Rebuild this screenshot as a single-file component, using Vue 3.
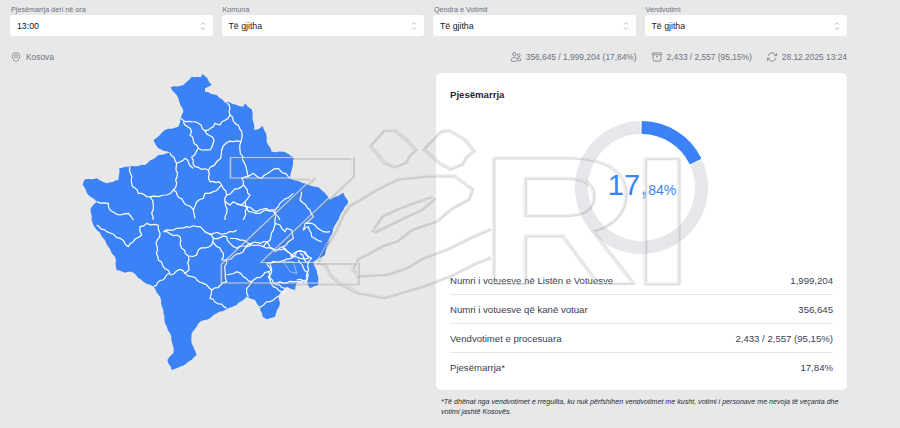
<template>
  <div class="page">
    <div class="filters">
      <div v-for="f in filters" :key="f.label" class="filter">
        <label class="filter-label">{{ f.label }}</label>
        <div class="filter-box">
          <span>{{ f.value }}</span>
          <svg viewBox="0 0 24 24" fill="none" stroke="currentColor" stroke-width="1.5">
            <path d="M8.25 15 12 18.75 15.75 15m-7.5-6L12 5.25 15.75 9" />
          </svg>
        </div>
      </div>
    </div>

    <div class="stats-row">
      <div class="stat">
        <svg viewBox="0 0 24 24" fill="none" stroke="currentColor" stroke-width="1.5">
          <path d="M15 10.5a3 3 0 1 1-6 0 3 3 0 0 1 6 0Z" />
          <path d="M19.5 10.5c0 7.142-7.5 11.25-7.5 11.25S4.5 17.642 4.5 10.5a7.5 7.5 0 1 1 15 0Z" />
        </svg>
        <span>Kosova</span>
      </div>
      <div class="stats-right">
        <div class="stat">
          <svg viewBox="0 0 24 24" fill="none" stroke="currentColor" stroke-width="1.5">
            <path d="M15 19.128a9.38 9.38 0 0 0 2.625.372 9.337 9.337 0 0 0 4.121-.952 4.125 4.125 0 0 0-7.533-2.493M15 19.128v-.003c0-1.113-.285-2.16-.786-3.07M15 19.128v.106A12.318 12.318 0 0 1 8.624 21c-2.331 0-4.512-.645-6.374-1.766l-.001-.109a6.375 6.375 0 0 1 11.964-3.07M12 6.375a3.375 3.375 0 1 1-6.75 0 3.375 3.375 0 0 1 6.75 0Zm8.25 2.25a2.625 2.625 0 1 1-5.25 0 2.625 2.625 0 0 1 5.25 0Z" />
          </svg>
          <span>356,645 / 1,999,204 (17,84%)</span>
        </div>
        <div class="stat">
          <svg viewBox="0 0 24 24" fill="none" stroke="currentColor" stroke-width="1.5">
            <path d="m20.25 7.5-.625 10.632a2.25 2.25 0 0 1-2.247 2.118H6.622a2.25 2.25 0 0 1-2.247-2.118L3.75 7.5M10 11.25h4M3.375 7.5h17.25c.621 0 1.125-.504 1.125-1.125v-1.5c0-.621-.504-1.125-1.125-1.125H3.375c-.621 0-1.125.504-1.125 1.125v1.5c0 .621.504 1.125 1.125 1.125Z" />
          </svg>
          <span>2,433 / 2,557 (95,15%)</span>
        </div>
        <div class="stat">
          <svg viewBox="0 0 24 24" fill="none" stroke="currentColor" stroke-width="1.5">
            <path d="M16.023 9.348h4.992v-.001M2.985 19.644v-4.992m0 0h4.992m-4.993 0 3.181 3.183a8.25 8.25 0 0 0 13.803-3.7M4.031 9.865a8.25 8.25 0 0 1 13.803-3.7l3.181 3.182m0-4.991v4.99" />
          </svg>
          <span>28.12.2025 13:24</span>
        </div>
      </div>
    </div>

    <div class="content">
      <div class="map-side">
        <svg class="map" viewBox="0 0 900 915">
          <polygon :points="outline" fill="#3b82f6" />
          <g class="map-lines">
            <polyline v-for="(l, i) in linesTop" :key="'a' + i" :points="l" />
            <g transform="translate(0 450)">
              <polyline v-for="(l, i) in linesBottom" :key="'b' + i" :points="l" />
              <polygon class="lake" points="640,125 660,155 680,160 670,125" />
            </g>
            <g transform="translate(480 360)">
              <polyline v-for="(l, i) in linesEast" :key="'c' + i" :points="l" />
            </g>
          </g>
        </svg>
      </div>

      <div class="side">
        <div class="card">
          <h3 class="card-title">Pjesëmarrja</h3>
          <div class="donut">
            <svg viewBox="0 0 133 133">
              <path :d="greyArc" class="arc-grey" />
              <path :d="blueArc" class="arc-blue" />
            </svg>
            <div class="donut-value"><span class="big">17,</span><span class="small">84%</span></div>
          </div>
          <div class="rows">
            <div v-for="r in rows" :key="r.label" class="row">
              <span>{{ r.label }}</span>
              <span>{{ r.value }}</span>
            </div>
          </div>
        </div>
        <p class="note">*Të dhënat nga vendvotimet e rregullta, ku nuk përfshihen vendvotimet me kusht, votimi i personave me nevoja të veçanta dhe votimi jashtë Kosovës.</p>
      </div>
    </div>

    <!-- watermark sits over the whole page -->
    <svg class="watermark" viewBox="0 0 900 428">
      <g v-for="c in ['wm-shade', 'wm-light']" :key="c" :class="c">
        <text transform="translate(214 283) scale(1.35 1)">Z</text>
        <text transform="translate(478 283) scale(1.21 1)">R</text>
        <text transform="translate(629 283) scale(1.27 1)">I</text>
        <g transform="translate(340 120) scale(.3333)">
          <polygon points="88,75 130,28 160,28 195,55 225,88 205,105 195,125 160,138 130,125" />
          <polygon points="248,85 300,32 325,28 370,55 400,90 375,110 365,130 330,145 300,130" />
          <polyline points="-70,425 -45,380 -15,330 5,285 25,255 60,235 100,210 170,175 260,165 340,165 395,205 385,235 330,265 290,300 215,325 170,360 125,375 80,400 50,415 35,445 50,465 140,460 200,440 250,410 320,385 390,350 450,325" />
          <polygon points="95,328 125,285 180,260 270,228 280,235 245,265 170,300 105,332" />
          <polyline points="-70,425 -50,430 -30,465 0,490 50,515 130,530 200,510 250,495 330,465 400,430 450,410" />
        </g>
      </g>
    </svg>
  </div>
</template>

<script setup>
const filters = [
  { label: 'Pjesëmarrja deri në ora', value: '13:00' },
  { label: 'Komuna', value: 'Të gjitha' },
  { label: 'Qendra e Votimit', value: 'Të gjitha' },
  { label: 'Vendvotimi', value: 'Të gjitha' }
]

const rows = [
  { label: 'Numri i votuesve në Listën e Votuesve', value: '1,999,204' },
  { label: 'Numri i votuesve që kanë votuar', value: '356,645' },
  { label: 'Vendvotimet e procesuara', value: '2,433 / 2,557 (95,15%)' },
  { label: 'Pjesëmarrja*', value: '17,84%' }
]

// borders were traced coarsely, this adds the small wiggle of a real boundary
const wobble = (points, amp) => {
  const pts = points.trim().split(/\s+/).map((p) => p.split(',').map(Number))
  const out = []
  pts.forEach((p, i) => {
    out.push(p.join(','))
    const next = pts[i + 1]
    if (!next) return
    const dx = next[0] - p[0]
    const dy = next[1] - p[1]
    const len = Math.hypot(dx, dy) || 1
    const steps = Math.floor(len / 9)
    for (let s = 1; s < steps; s++) {
      const off = amp * Math.sin((p[0] + s * 7.3) * 2.1 + (p[1] + s) * 1.7)
      const x = p[0] + (dx * s) / steps - (dy / len) * off
      const y = p[1] + (dy * s) / steps + (dx / len) * off
      out.push(`${x.toFixed(1)},${y.toFixed(1)}`)
    }
  })
  return out.join(' ')
}

const outline = wobble('302,52 340,45 365,20 392,22 398,12 412,25 425,45 405,55 405,65 440,75 465,98 475,95 500,105 520,110 525,100 545,118 553,180 565,178 578,168 588,190 590,215 605,245 640,245 672,262 665,300 660,325 700,340 735,350 745,352 770,375 780,390 820,368 835,395 820,420 795,465 770,530 765,555 730,575 745,620 745,645 720,655 710,635 690,635 680,640 675,660 650,650 640,660 625,678 630,700 615,740 590,748 578,740 570,712 555,690 530,680 500,705 475,715 440,730 420,745 390,755 380,770 365,790 365,820 372,835 380,855 350,880 320,895 305,900 292,870 310,850 310,830 300,790 285,760 283,740 270,680 250,650 220,635 185,605 165,608 140,600 135,560 125,550 105,510 70,465 65,450 62,415 80,395 55,375 38,345 45,328 80,325 110,340 145,330 148,295 175,290 225,285 265,255 300,248 265,235 250,210 270,195 285,180 325,170 332,145 340,125 325,85 302,52', 1.5)

// municipality borders, traced in three separate crops
const linesTop = [
  '332,145 345,155 365,155 385,160 405,182 430,170 435,160 450,165 480,135 480,115 470,98',
  '480,135 515,185 513,215 510,240 518,270 530,300 535,320 515,325 520,345 470,375 455,345 447,335 420,335 415,300 440,275 452,265 455,240 470,218 490,215 513,215',
  '340,155 365,185 360,195 385,235 365,262 375,290 415,300',
  '405,182 432,210 420,240 395,240 385,235',
  '300,248 320,280 345,265 370,295',
  '320,280 320,340 310,360 290,375 265,380 240,380 205,370 185,340 180,290',
  '310,360 340,395 370,420 375,445',
  '370,420 380,395 400,385 405,370 430,365 445,355 455,345',
  '470,375 465,395 480,405 490,395 515,405 525,395 540,375 520,345',
  '530,320 550,310 575,325 600,305 625,295 660,325',
  '240,380 250,405 245,430 250,450',
  '80,395 115,400 120,420 150,435 175,430 190,450',
  '530,410 560,425 590,415 615,430 630,450',
  '465,395 470,430 465,450',
  '525,395 530,415 520,450'
].map((l) => wobble(l, 3))

const linesBottom = [
  '80,15 110,35 150,55 175,80 190,65 215,45 210,20 230,10 265,15',
  '265,15 270,40 258,70 265,120 300,160 250,200',
  '280,35 330,50 335,85 355,108 357,150 345,160 330,148 300,165',
  '357,108 380,105 385,90 425,75 430,55 415,40',
  '280,35 320,25 350,20 390,20 415,40 470,40 500,30',
  '345,160 365,170 400,190 425,210 420,235 470,265',
  '425,210 470,185 465,150 470,120 455,120 460,100 430,65',
  '470,165 500,155 520,170 545,185 595,155 605,150 600,130 615,125',
  '545,185 530,205 535,230',
  '595,155 610,190 645,205',
  '610,190 680,185 710,185 715,130 690,100',
  '470,120 510,100 545,70 590,65 615,95 640,80 665,110 680,95 700,95 725,115 715,130',
  '430,55 470,50 480,70 500,85 545,70',
  '570,262 590,245 610,240 625,228'
].map((l) => wobble(l, 3))

const linesEast = [
  '190,10 150,40 135,60 105,60 90,70 55,65 50,50 20,40',
  '135,60 135,100 150,105 165,125 170,115 185,120 190,145 160,170',
  '225,100 245,100 280,125 300,125',
  '215,5 210,30 240,60 250,80 225,100 220,120 235,110 245,140 275,155',
  '135,100 120,150 100,170 135,180 165,175 190,200 200,185 225,185 235,205 210,205 190,200',
  '110,220 125,245 115,260 130,290 165,310',
  '110,220 160,212 190,200',
  '205,210 235,255 230,270 200,270',
  '0,145 40,150 60,165 85,165 100,170'
].map((l) => wobble(l, 2))

// annulus sector for the donut, angles in degrees from 12 o'clock
const sector = (from, to) => {
  const c = 66.5
  const point = (r, a) => {
    const rad = ((a - 90) * Math.PI) / 180
    return `${(c + r * Math.cos(rad)).toFixed(2)} ${(c + r * Math.sin(rad)).toFixed(2)}`
  }
  const large = to - from > 180 ? 1 : 0
  return `M${point(65.5, from)}A65.5 65.5 0 ${large} 1 ${point(65.5, to)}L${point(54.5, to)}A54.5 54.5 0 ${large} 0 ${point(54.5, from)}Z`
}

const blueArc = sector(1, 63.5)
const greyArc = sector(66, 358)
</script>

<style>
html,
body {
  margin: 0;
  background: #e8e8e8;
}
</style>

<style scoped>
.page {
  position: relative;
  width: 900px;
  height: 428px;
  overflow: hidden;
  box-sizing: border-box;
  padding: 4px 53px 0 10px;
  background: #e8e8e8;
  font-family: "Liberation Sans", Arial, sans-serif;
  color: #374151;
}

.filters {
  display: grid;
  grid-template-columns: repeat(4, 1fr);
  gap: 9px;
}

.filter-label {
  display: block;
  padding-left: 1px;
  font-size: 7.2px;
  line-height: 11px;
  color: #6b7280;
}

.filter-box {
  display: flex;
  align-items: center;
  justify-content: space-between;
  height: 21px;
  padding: 0 4px 0 7px;
  background: white;
  border-radius: 3px;
  font-size: 8.75px;
  color: #111827;
}

.filter-box svg {
  width: 12px;
  height: 12px;
  color: #9ca3af;
}

.stats-row {
  display: flex;
  justify-content: space-between;
  align-items: center;
  height: 14px;
  margin-top: 14px;
  font-size: 8.4px;
  color: #6b7280;
}

.stats-right {
  display: flex;
  gap: 14px;
}

.stat {
  display: flex;
  align-items: center;
  gap: 4px;
}

.stat svg {
  width: 12px;
  height: 12px;
}

.content {
  display: flex;
  gap: 9px;
  margin-top: 9px;
}

.map-side {
  flex: 1;
  padding-left: 60px;
}

.map {
  display: block;
  width: 300px;
  height: 305px;
  margin-top: -3px;
}

.map-lines polyline,
.map-lines polygon {
  fill: none;
  stroke: #fff;
  stroke-width: 3.6;
  stroke-linejoin: round;
}

.map-lines .lake {
  stroke-width: 1.5;
}

.side {
  width: 411px;
  flex-shrink: 0;
}

.card {
  height: 317px;
  box-sizing: border-box;
  padding: 16px 14px 0;
  background: white;
  border-radius: 5px;
}

.card-title {
  margin: 0;
  font-size: 9.6px;
  line-height: 12px;
  font-weight: 700;
  color: #1f2937;
}

.donut {
  display: grid;
  place-items: center;
  width: 133px;
  height: 133px;
  margin: 20px auto 0;
}

.donut > * {
  grid-area: 1 / 1;
}

.donut svg {
  width: 133px;
  height: 133px;
}

.arc-grey {
  fill: #e5e7eb;
  stroke: #e5e7eb;
  stroke-width: 2;
  stroke-linejoin: round;
}

.arc-blue {
  fill: #3b82f6;
  stroke: #3b82f6;
  stroke-width: 2;
  stroke-linejoin: round;
}

.donut-value {
  margin: -4px 0 0 1px;
  color: #3b82f6;
  white-space: nowrap;
}

.big {
  font-size: 29px;
}

.small {
  font-size: 14px;
}

.rows {
  margin-top: 12px;
}

.row {
  display: flex;
  justify-content: space-between;
  align-items: center;
  box-sizing: border-box;
  height: 29px;
  font-size: 9.6px;
  border-bottom: 1px solid #e5e7eb;
}

.row:last-child {
  border-bottom: none;
}

.note {
  margin: 8px 0 0 5px;
  font-size: 7.1px;
  line-height: 9.5px;
  font-style: italic;
  color: #1f2937;
}

.watermark {
  position: absolute;
  left: 0;
  top: 0;
  width: 900px;
  height: 428px;
  pointer-events: none;
}

.watermark text {
  font-family: "Liberation Sans", Arial, sans-serif;
  font-weight: 700;
  font-size: 182px;
}

.watermark text,
.watermark polygon,
.watermark polyline {
  fill: none;
  stroke-linejoin: round;
}

.wm-shade {
  transform: translate(1px, 1px);
}

.wm-shade text,
.wm-shade polygon,
.wm-shade polyline {
  stroke: rgba(120, 120, 120, 0.24);
}

.wm-shade text {
  stroke-width: 3px;
}

.wm-shade polygon,
.wm-shade polyline {
  stroke-width: 10px;
}

.wm-light text,
.wm-light polygon,
.wm-light polyline {
  stroke: rgba(255, 255, 255, 0.6);
}

.wm-light text {
  stroke-width: 1px;
}

.wm-light polygon,
.wm-light polyline {
  stroke-width: 2.5px;
}
</style>
